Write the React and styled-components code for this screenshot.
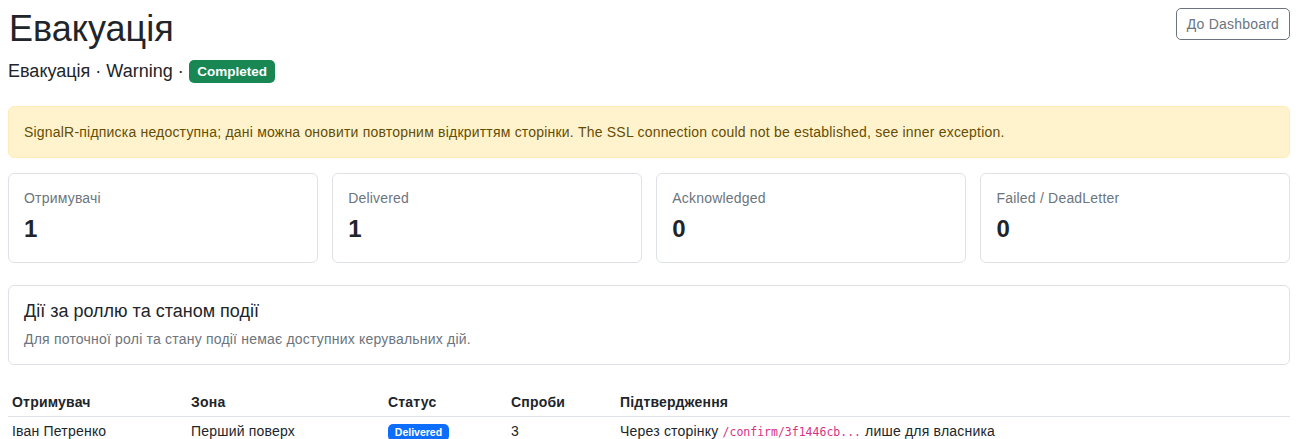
import React from "react";
import styled, { createGlobalStyle } from "styled-components";

const GlobalStyle = createGlobalStyle`
  html, body {
    margin: 0;
    padding: 0;
    background: #ffffff;
  }
  body {
    font-family: "Liberation Sans", Arial, sans-serif;
    color: #212529;
    font-size: 14px;
    letter-spacing: 0.2px;
    line-height: 1.5;
  }
  * { box-sizing: border-box; }
`;

const Page = styled.main`
  padding: 8px 9px 8px 8px;
`;

const Header = styled.header`
  display: flex;
  justify-content: space-between;
  align-items: flex-start;
  margin-bottom: 21px;
`;

const TitleBlock = styled.div`
  display: flex;
  flex-direction: column;
  gap: 8px;
`;

const Title = styled.h1`
  margin: 0 0 0 1px;
  font-size: 36px;
  font-weight: 400;
  letter-spacing: 0;
  line-height: 42px;
`;

const Subtitle = styled.div`
  font-size: 18px;
  letter-spacing: 0;
  line-height: 27px;
  display: flex;
  align-items: center;
  gap: 5px;
`;

const Badge = styled.span`
  display: inline-block;
  font-weight: 700;
  font-size: ${(p) => p.$size}px;
  letter-spacing: 0;
  line-height: 1;
  padding: ${(p) => p.$pad};
  border-radius: 5px;
  color: #ffffff;
  background: ${(p) => p.$bg};
  white-space: nowrap;
`;

const OutlineButton = styled.button`
  font-family: inherit;
  font-size: 14px;
  letter-spacing: 0.2px;
  line-height: 20px;
  padding: 5px 10px;
  color: #6c757d;
  background: transparent;
  border: 1px solid #6c757d;
  border-radius: 5px;
  cursor: pointer;
`;

const Alert = styled.div`
  padding: 15px 15px;
  line-height: 20px;
  background: #fff3cd;
  border: 1px solid #ffecb5;
  color: #664d03;
  border-radius: 6px;
  margin-bottom: 15px;
`;

const StatsGrid = styled.section`
  display: grid;
  grid-template-columns: repeat(4, 1fr);
  gap: 14.67px;
  margin-bottom: 22px;
`;

const Card = styled.div`
  border: 1px solid #dee2e6;
  border-radius: 6px;
  background: #ffffff;
`;

const StatCard = styled(Card)`
  padding: 14px 15px 19px;
  display: flex;
  flex-direction: column;
  gap: 5px;
`;

const StatLabel = styled.div`
  color: #6c757d;
  line-height: 21px;
`;

const StatValue = styled.div`
  font-size: 24px;
  font-weight: 700;
  letter-spacing: 0;
  line-height: 29px;
`;

const ActionsCard = styled(Card)`
  padding: 15px 15px 14px;
  margin-bottom: 28px;
`;

const ActionsTitle = styled.h5`
  margin: 0 0 6px;
  font-size: 18px;
  font-weight: 400;
  letter-spacing: 0;
  line-height: 21.6px;
`;

const Muted = styled.p`
  margin: 0;
  color: #6c757d;
  line-height: 21px;
`;

const Table = styled.table`
  width: 100%;
  border-collapse: collapse;
  table-layout: fixed;
`;

const Th = styled.th`
  text-align: left;
  font-weight: 700;
  padding: 0 4px 4px;
  line-height: 19px;
  border-bottom: 1px solid #dee2e6;
  width: ${(p) => (p.$w ? `${p.$w}px` : "auto")};
`;

const Td = styled.td`
  padding: 5px 4px 0;
  line-height: 19px;
  vertical-align: middle;
`;

const Code = styled.code`
  font-family: "DejaVu Sans Mono", "Liberation Mono", monospace;
  font-size: 11.5px;
  letter-spacing: 0;
  color: #d63384;
`;

const stats = [
  { label: "Отримувачі", value: 1 },
  { label: "Delivered", value: 1 },
  { label: "Acknowledged", value: 0 },
  { label: "Failed / DeadLetter", value: 0 },
];

export default function App() {
  return (
    <>
      <GlobalStyle />
      <Page>
        <Header>
          <TitleBlock>
            <Title>Евакуація</Title>
            <Subtitle>
              <span>Евакуація · Warning ·</span>
              <Badge $size={13.5} $pad="4.5px 8.5px" $bg="#198754">
                Completed
              </Badge>
            </Subtitle>
          </TitleBlock>
          <OutlineButton type="button">До Dashboard</OutlineButton>
        </Header>

        <Alert>
          SignalR-підписка недоступна; дані можна оновити повторним відкриттям
          сторінки. The SSL connection could not be established, see inner
          exception.
        </Alert>

        <StatsGrid>
          {stats.map((s) => (
            <StatCard key={s.label}>
              <StatLabel>{s.label}</StatLabel>
              <StatValue>{s.value}</StatValue>
            </StatCard>
          ))}
        </StatsGrid>

        <ActionsCard>
          <ActionsTitle>Дії за роллю та станом події</ActionsTitle>
          <Muted>Для поточної ролі та стану події немає доступних керувальних дій.</Muted>
        </ActionsCard>

        <Table>
          <thead>
            <tr>
              <Th $w={179}>Отримувач</Th>
              <Th $w={197}>Зона</Th>
              <Th $w={123}>Статус</Th>
              <Th $w={109}>Спроби</Th>
              <Th>Підтвердження</Th>
            </tr>
          </thead>
          <tbody>
            <tr>
              <Td>Іван Петренко</Td>
              <Td>Перший поверх</Td>
              <Td>
                <Badge $size={10.5} $pad="3.5px 6.8px" $bg="#0d6efd">
                  Delivered
                </Badge>
              </Td>
              <Td>3</Td>
              <Td>
                Через сторінку <Code>/confirm/3f1446cb...</Code> лише для власника
              </Td>
            </tr>
          </tbody>
        </Table>
      </Page>
    </>
  );
}
